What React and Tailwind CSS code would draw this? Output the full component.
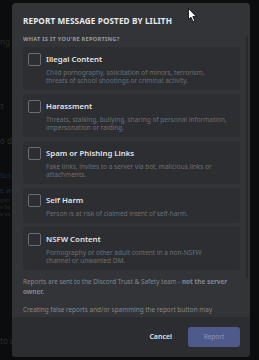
import React from "react";

const items = [
  {
    title: "Illegal Content",
    desc: ["Child pornography, solicitation of minors, terrorism,", "threats of school shootings or criminal activity."],
  },
  {
    title: "Harassment",
    desc: ["Threats, stalking, bullying, sharing of personal information,", "impersonation or raiding."],
  },
  {
    title: "Spam or Phishing Links",
    desc: ["Fake links, invites to a server via bot, malicious links or", "attachments."],
  },
  {
    title: "Self Harm",
    desc: ["Person is at risk of claimed intent of self-harm."],
  },
  {
    title: "NSFW Content",
    desc: ["Pornography or other adult content in a non-NSFW", "channel or unwanted DM."],
  },
];

function Card({ title, desc }) {
  return (
    <div className="rounded-[3px] bg-[#2c2e32] pl-[5px] pr-[4px] pt-[6px] pb-[5px]">
      <div className="flex items-center gap-[5px] h-[13px]">
        <div className="w-[13px] h-[13px] rounded-[2px] border border-[#6a6d73] shrink-0" />
        <div className="text-[7.8px] font-semibold text-[#e3e4e6] leading-[13px]">{title}</div>
      </div>
      <div className="pl-[18px] mt-[3px] text-[6.5px] leading-[8px] text-[#6b6e74]">
        {desc.map((d, i) => (
          <div key={i} className="whitespace-nowrap">{d}</div>
        ))}
      </div>
    </div>
  );
}

export default function App() {
  return (
    <div
      className="relative w-[259px] h-[360px] overflow-hidden bg-[#0b0c0d]"
      style={{ fontFamily: '"Noto Sans", "Open Sans", sans-serif' }}
    >
      {/* dimmed backdrop text, partly hidden by the modal */}
      <div className="flex flex-col text-[8px] leading-[10px] text-[#2a2c2e] whitespace-nowrap pt-[37px]">
        <div>ng i</div>
        <div className="mt-[54px]">s</div>
        <div className="mt-[25px]">o dr</div>
        <div className="mt-[25px] text-[7px] text-[#1b2a3e]">Sco</div>
        <div className="mt-[5px] text-[7px] text-[#1b2a3e]">e w</div>
        <div className="mt-[1px] text-[5.5px] leading-[7px] text-[#26282b]">gan</div>
        <div className="text-[5.5px] leading-[7px] text-[#26282b]">s Se</div>
        <div className="text-[5.5px] leading-[7px] text-[#26282b]">e se</div>
        <div className="mt-[118px]">to d</div>
      </div>

      {/* modal */}
      <div className="absolute left-[12px] top-[3px] w-[238px] h-[354px] rounded-[4px] bg-[#323438] flex flex-col overflow-hidden">
        <div className="px-[11px] pt-[12px] h-[32px] shrink-0">
          <div className="text-[8.2px] font-bold leading-[12px] text-[#e8e9ea] tracking-[0.1px] whitespace-nowrap">
            REPORT MESSAGE POSTED BY LILITH
          </div>
        </div>
        <div className="flex-1 flex overflow-hidden">
          <div className="flex-1 pl-[11px] pr-[6px]">
            <div className="text-[5.6px] font-bold leading-[8px] text-[#9a9ca0] tracking-[0.3px] h-[12px]">
              WHAT IS IT YOU'RE REPORTING?
            </div>
            <div className="flex flex-col gap-[4px]">
              {items.map((it) => (
                <Card key={it.title} {...it} />
              ))}
            </div>
            <div className="mt-[7px] text-[6.4px] leading-[10px] text-[#85878c]">
              Reports are sent to the Discord Trust &amp; Safety team -{" "}
              <span className="font-bold">not the server owner.</span>
            </div>
            <div className="mt-[8px] text-[6.4px] leading-[10px] text-[#85878c] whitespace-nowrap">
              <div>Creating false reports and/or spamming the report button may</div>
              <div>result in a suspension of your account.</div>
            </div>
          </div>
          <div className="w-[4px] pr-[2px] pt-[1px] shrink-0">
            <div className="w-[2px] h-[242px] rounded-full bg-[#26282b]" />
          </div>
        </div>
        <div className="h-[40px] shrink-0 bg-[#2b2d31] flex items-center justify-end pr-[10px] gap-[16px]">
          <div className="text-[7px] font-semibold text-[#e3e4e6]">Cancel</div>
          <div className="w-[52px] h-[20px] rounded-[3px] bg-[#4e5a8c] flex items-center justify-center text-[6.5px] text-[#8d95b8]">
            Report
          </div>
        </div>
      </div>

      {/* mouse cursor */}
      <svg className="absolute left-[188px] top-[8px]" width="10" height="15" viewBox="0 0 10 15">
        <path d="M0.5 0.5 L0.5 11.5 L3 9.2 L5 13.8 L6.8 13 L4.8 8.6 L8.3 8.6 Z" fill="#ffffff" stroke="#000000" strokeWidth="0.8" strokeLinejoin="round" />
      </svg>
    </div>
  );
}
